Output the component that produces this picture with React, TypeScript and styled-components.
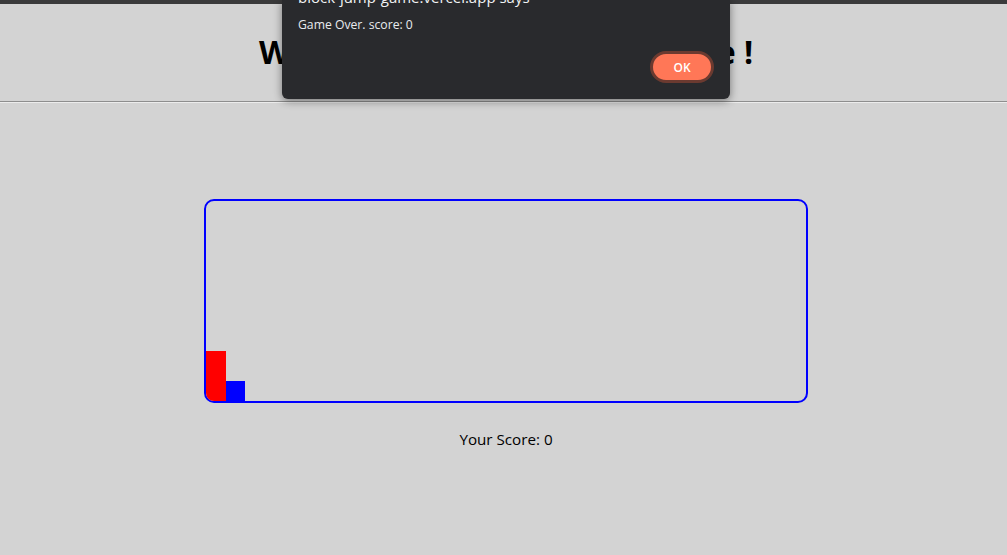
import React from "react";
import styled, { createGlobalStyle } from "styled-components";

const GlobalStyle = createGlobalStyle`
  html, body {
    margin: 0;
    padding: 0;
    background: #d3d3d3;
    font-family: "Open Sans", "Noto Sans", "Liberation Sans", sans-serif;
    overflow: hidden;
  }
`;

const Page = styled.div`
  position: relative;
  width: 1007px;
  height: 555px;
  background: #d3d3d3;
`;

const TopStrip = styled.div`
  height: 4px;
  background: #3a3a3b;
`;

const Header = styled.header`
  padding: 32px 0 0 5px;
  text-align: center;
`;

const Title = styled.h1`
  margin: 0;
  font-size: 32px;
  line-height: 32px;
  font-weight: 700;
  color: #000;
`;

const Rule = styled.hr`
  margin: 33px 0 0;
  border: none;
  border-top: 1px solid #8e8e8e;
  border-bottom: 1px solid #ececec;
  height: 0;
`;

const Main = styled.main`
  display: flex;
  flex-direction: column;
  align-items: center;
  padding: 96px 0 0 5px;
`;

const GameBoard = styled.div`
  position: relative;
  width: 600px;
  height: 200px;
  border: 2px solid #0000ff;
  border-radius: 10px;
  overflow: hidden;
`;

const Block = styled.div<{ $color: string; $left: number; $w: number; $h: number }>`
  position: absolute;
  bottom: 0;
  left: ${(p) => p.$left}px;
  width: ${(p) => p.$w}px;
  height: ${(p) => p.$h}px;
  background: ${(p) => p.$color};
`;

const Score = styled.p`
  margin: 26px 0 0;
  font-size: 15.2px;
  color: #000;
`;

const Dialog = styled.div`
  position: absolute;
  top: 0;
  left: 282px;
  width: 448px;
  height: 99px;
  box-sizing: border-box;
  padding: 0 16px;
  background: #292a2d;
  border-radius: 0 0 6px 6px;
  box-shadow: 0 2px 8px rgba(0, 0, 0, 0.45);
  color: #e8eaed;
`;

const DialogTitle = styled.div`
  margin-top: -13px;
  font-size: 15px;
  line-height: 20px;
  color: #f1f3f4;
  white-space: nowrap;
`;

const DialogMessage = styled.div`
  margin-top: 9px;
  font-size: 12.2px;
  line-height: 17px;
  color: #e8eaed;
`;

const ButtonRow = styled.div`
  display: flex;
  justify-content: flex-end;
  margin-top: 18px;
`;

const OkButton = styled.button`
  width: 64px;
  height: 32px;
  box-sizing: border-box;
  border: 3px solid #6b3a30;
  border-radius: 16px;
  background: #ff7757;
  color: #fff;
  font-family: "Open Sans", "Noto Sans", sans-serif;
  font-size: 12px;
  font-weight: 600;
  padding: 0;
  cursor: pointer;
`;

export default function App() {
  const score = 0;
  return (
    <>
      <GlobalStyle />
      <Page>
        <TopStrip />
        <Header>
          <Title>Welcome to Block Jump Game !</Title>
        </Header>
        <Rule />
        <Main>
          <GameBoard>
            <Block $color="#ff0000" $left={0} $w={20} $h={50} />
            <Block $color="#0000ff" $left={20} $w={19} $h={20} />
          </GameBoard>
          <Score>Your Score: {score}</Score>
        </Main>
        <Dialog>
          <DialogTitle>block-jump-game.vercel.app says</DialogTitle>
          <DialogMessage>Game Over. score: {score}</DialogMessage>
          <ButtonRow>
            <OkButton>OK</OkButton>
          </ButtonRow>
        </Dialog>
      </Page>
    </>
  );
}
